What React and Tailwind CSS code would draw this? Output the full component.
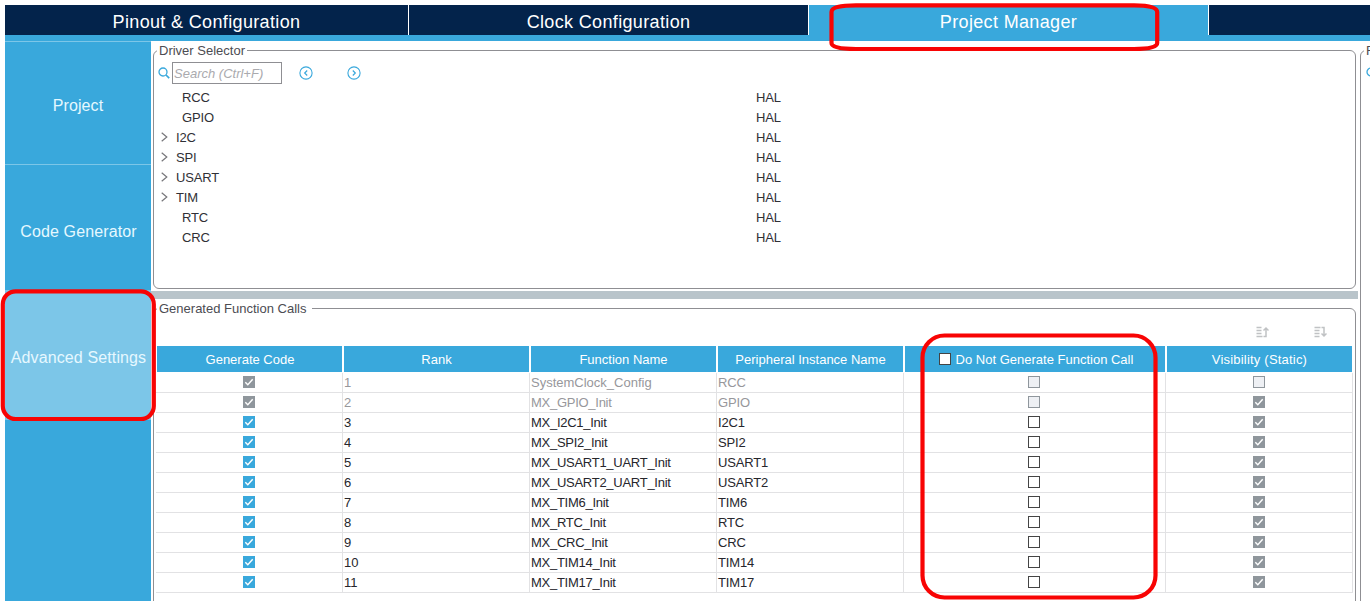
import React from 'react';

const drivers = [
    { name: 'RCC' },
    { name: 'GPIO' },
    { name: 'I2C', group: true },
    { name: 'SPI', group: true },
    { name: 'USART', group: true },
    { name: 'TIM', group: true },
    { name: 'RTC' },
    { name: 'CRC' },
];

const calls = [
    { fn: 'SystemClock_Config', instance: 'RCC', locked: true, hidden: true },
    { fn: 'MX_GPIO_Init', instance: 'GPIO', locked: true },
    { fn: 'MX_I2C1_Init', instance: 'I2C1' },
    { fn: 'MX_SPI2_Init', instance: 'SPI2' },
    { fn: 'MX_USART1_UART_Init', instance: 'USART1' },
    { fn: 'MX_USART2_UART_Init', instance: 'USART2' },
    { fn: 'MX_TIM6_Init', instance: 'TIM6' },
    { fn: 'MX_RTC_Init', instance: 'RTC' },
    { fn: 'MX_CRC_Init', instance: 'CRC' },
    { fn: 'MX_TIM14_Init', instance: 'TIM14' },
    { fn: 'MX_TIM17_Init', instance: 'TIM17' },
];

const gridCols = 'grid grid-cols-[187px_187px_187px_187px_262px_187px]';

const Checked = ({ disabled }) => (
    <svg
        width="12"
        height="12"
        viewBox="0 0 12 12"
        className={disabled ? 'bg-[#8f969c]' : 'bg-[#39a8dc]'}
    >
        <path d="M2.3 6.2 L4.8 8.8 L9.7 3.2" fill="none" stroke="#fff" strokeWidth="1.4" />
    </svg>
);

const Unchecked = ({ disabled }) => (
    <span
        className={`block size-3 border ${
            disabled ? 'border-[#8f969c] bg-[#eef0f4]' : 'border-[#444] bg-white'
        }`}
    />
);

const SearchIcon = () => (
    <svg width="12" height="12" viewBox="0 0 12 12" fill="none" stroke="#39a8dc" className="shrink-0">
        <circle cx="5" cy="5" r="4" strokeWidth="1.3" />
        <path d="M8 8 L11.2 11.2" strokeWidth="1.7" />
    </svg>
);

const ArrowButton = ({ d }) => (
    <svg width="14" height="14" viewBox="0 0 14 14" fill="none" stroke="#39a8dc">
        <circle cx="7" cy="7" r="6.1" strokeWidth="1.1" />
        <path d={d} strokeWidth="1.2" />
    </svg>
);

const SortIcon = ({ down }) => (
    <svg width="13" height="12" viewBox="0 0 13 12" fill="none" stroke="#c0c2c4">
        <path
            d={down ? 'M0.5 1.5H6.5 M0.5 4.5H5.5 M0.5 7.5H5.5 M0.5 10.5H5.5' : 'M0.5 1.5H5.5 M0.5 4.5H5.5 M0.5 7.5H5.5 M0.5 10.5H6.5'}
            strokeWidth="1.3"
        />
        <path
            d={down ? 'M7.5 1.5H10V10 M7.5 7.5L10 10L12.5 7.5' : 'M7.5 10.5H10V2 M7.5 4.5L10 2L12.5 4.5'}
            strokeWidth="1.5"
        />
    </svg>
);

const HeaderCell = ({ children }) => (
    <div className="flex h-[26px] items-center justify-center gap-[5px] border-x border-white bg-[#39a8dc] text-white">
        {children}
    </div>
);

const Cell = ({ center, children }) => (
    <div
        className={`flex h-5 items-center border-r border-b border-[#e2e2e4] ${
            center ? 'justify-center pr-px pb-px' : 'pl-px'
        }`}
    >
        {children}
    </div>
);

const Tabs = () => (
    <div className="ml-[5px] shrink-0 border-b-[6px] border-[#39a8dc] text-[18px] tracking-[0.35px] text-white">
        <div className="flex h-[30px] gap-px">
            <div className="flex w-[403px] items-center justify-center bg-[#03234b] pt-1">Pinout &amp; Configuration</div>
            <div className="flex w-[399px] items-center justify-center bg-[#03234b] pt-1">Clock Configuration</div>
            <div className="flex w-[399px] items-center justify-center bg-[#39a8dc] pt-1">Project Manager</div>
            <div className="flex-1 bg-[#03234b]" />
        </div>
    </div>
);

const Sidebar = () => (
    <div className="ml-[5px] flex w-[146px] shrink-0 flex-col border-t border-[#7cc6e8] bg-[#39a8dc] text-center text-[16px] tracking-[0.12px] text-[#e6f8ff]">
        <div className="flex h-[123px] items-center justify-center border-b border-[#7cc6e8] pt-1.5">Project</div>
        <div className="flex h-[126px] items-center justify-center border-b border-[#7cc6e8] pt-2 pl-px">Code Generator</div>
        <div className="flex h-[129px] items-center justify-center bg-[#7cc6e8] pt-1 pl-px whitespace-nowrap">Advanced Settings</div>
    </div>
);

const DriverSelector = () => (
    <fieldset className="mx-0.5 h-[247px] rounded-md border border-[#8f8f93]">
        <legend className="ml-[3px] h-[17px] px-0.5 leading-[17px] text-[#4c4c52]">Driver Selector</legend>
        <div className="flex items-center pt-[3px] pl-1">
            <SearchIcon />
            <div className="ml-0.5 h-[22px] w-[110px] border border-[#8f8f93] pt-px pl-px leading-5 text-[#aaaaae] italic">
                Search (Ctrl+F)
            </div>
            <div className="ml-[17px] flex gap-[34px]">
                <ArrowButton d="M8.2 4.5 L5.7 7 L8.2 9.5" />
                <ArrowButton d="M5.8 4.5 L8.3 7 L5.8 9.5" />
            </div>
        </div>
        <div className="pt-[3px] pl-[7px] tracking-[-0.15px] text-[#303036]">
            {drivers.map((d) => (
                <div key={d.name} className="flex h-5 items-center pt-px">
                    <div className={`flex w-[595px] items-center ${d.group ? '' : 'pl-[21px]'}`}>
                        {d.group && (
                            <svg width="8" height="10" viewBox="0 0 8 10" fill="none" stroke="#77777b" className="mr-[7px] mb-0.5">
                                <path d="M0.7 0.7 L5.8 5 L0.7 9.3" strokeWidth="1.2" />
                            </svg>
                        )}
                        {d.name}
                    </div>
                    <div>HAL</div>
                </div>
            ))}
        </div>
    </fieldset>
);

const FunctionCalls = () => (
    <fieldset className="mx-0.5 h-[320px] rounded-md border border-[#8f8f93]">
        <legend className="ml-[3px] h-[17px] pr-[6px] pl-0.5 leading-[17px] text-[#4c4c52]">
            Generated Function Calls
        </legend>
        <div className="flex h-[29px] justify-end gap-[45px] pt-[9px] pr-7">
            <SortIcon />
            <SortIcon down />
        </div>
        <div className="ml-0.5 w-[1197px]">
            <div className={`${gridCols} border-b border-white`}>
                <HeaderCell>
                    <span className="pt-px pl-px">Generate Code</span>
                </HeaderCell>
                <HeaderCell>
                    <span className="pt-px">Rank</span>
                </HeaderCell>
                <HeaderCell>
                    <span className="pt-px">Function Name</span>
                </HeaderCell>
                <HeaderCell>
                    <span className="pt-px">Peripheral Instance Name</span>
                </HeaderCell>
                <HeaderCell>
                    <span className="pl-0.5">
                        <Unchecked />
                    </span>
                    <span className="pt-px">Do Not Generate Function Call</span>
                </HeaderCell>
                <HeaderCell>
                    <span className="pt-px tracking-[0.2px]">Visibility (Static)</span>
                </HeaderCell>
            </div>
            {calls.map((c, i) => (
                <div key={c.fn} className={`${gridCols} ${c.locked ? 'text-[#97979b]' : 'text-[#26262c]'}`}>
                    <Cell center>
                        <Checked disabled={c.locked} />
                    </Cell>
                    <Cell>{i + 1}</Cell>
                    <Cell>
                        <span className={c.fn.startsWith('MX_') ? 'tracking-[-0.27px]' : ''}>{c.fn}</span>
                    </Cell>
                    <Cell>
                        <span className="tracking-[-0.15px]">{c.instance}</span>
                    </Cell>
                    <Cell center>
                        <Unchecked disabled={c.locked} />
                    </Cell>
                    <Cell center>{c.hidden ? <Unchecked disabled /> : <Checked disabled />}</Cell>
                </div>
            ))}
        </div>
    </fieldset>
);

// Red outlines that point out the settings to change
const Highlights = () => (
    <svg className="pointer-events-none absolute inset-0" width="1370" height="601" fill="none" stroke="#f80404" strokeWidth="4.2">
        <path d="M831.5 12 Q831.5 5.3 856 5.3 H1134 Q1157.2 5.3 1157.2 12 V43 Q1157.2 49 1134 49 H856 Q831.5 49 831.5 43 Z" />
        <rect x="2.8" y="291.3" width="151" height="127.7" rx="13" />
        <rect x="922.5" y="335.5" width="233" height="262" rx="22" />
    </svg>
);

const App = () => {
    return (
        <div className="relative flex h-[601px] w-[1370px] flex-col overflow-hidden bg-white pt-[5px] font-['Liberation_Sans',Arial,sans-serif] text-[13px]">
            <Tabs />
            <div className="flex min-h-0 flex-1">
                <Sidebar />
                <div className="w-[1207px] shrink-0 pt-[1px]">
                    <DriverSelector />
                    <div className="mt-0.5 h-2 bg-[#b9c4ca]" />
                    <div className="pt-[1px]">
                        <FunctionCalls />
                    </div>
                </div>
                <div className="w-3 shrink-0 overflow-hidden pt-[1px] pl-0.5">
                    <fieldset className="h-[620px] w-[200px] rounded-md border border-[#8f8f93]">
                        <legend className="ml-[3px] h-[17px] px-0.5 leading-[17px] text-[#4c4c52]">Register CallBack</legend>
                        <div className="pt-2 pl-[5px]">
                            <SearchIcon />
                        </div>
                    </fieldset>
                </div>
            </div>
            <Highlights />
        </div>
    );
};

export default App;
